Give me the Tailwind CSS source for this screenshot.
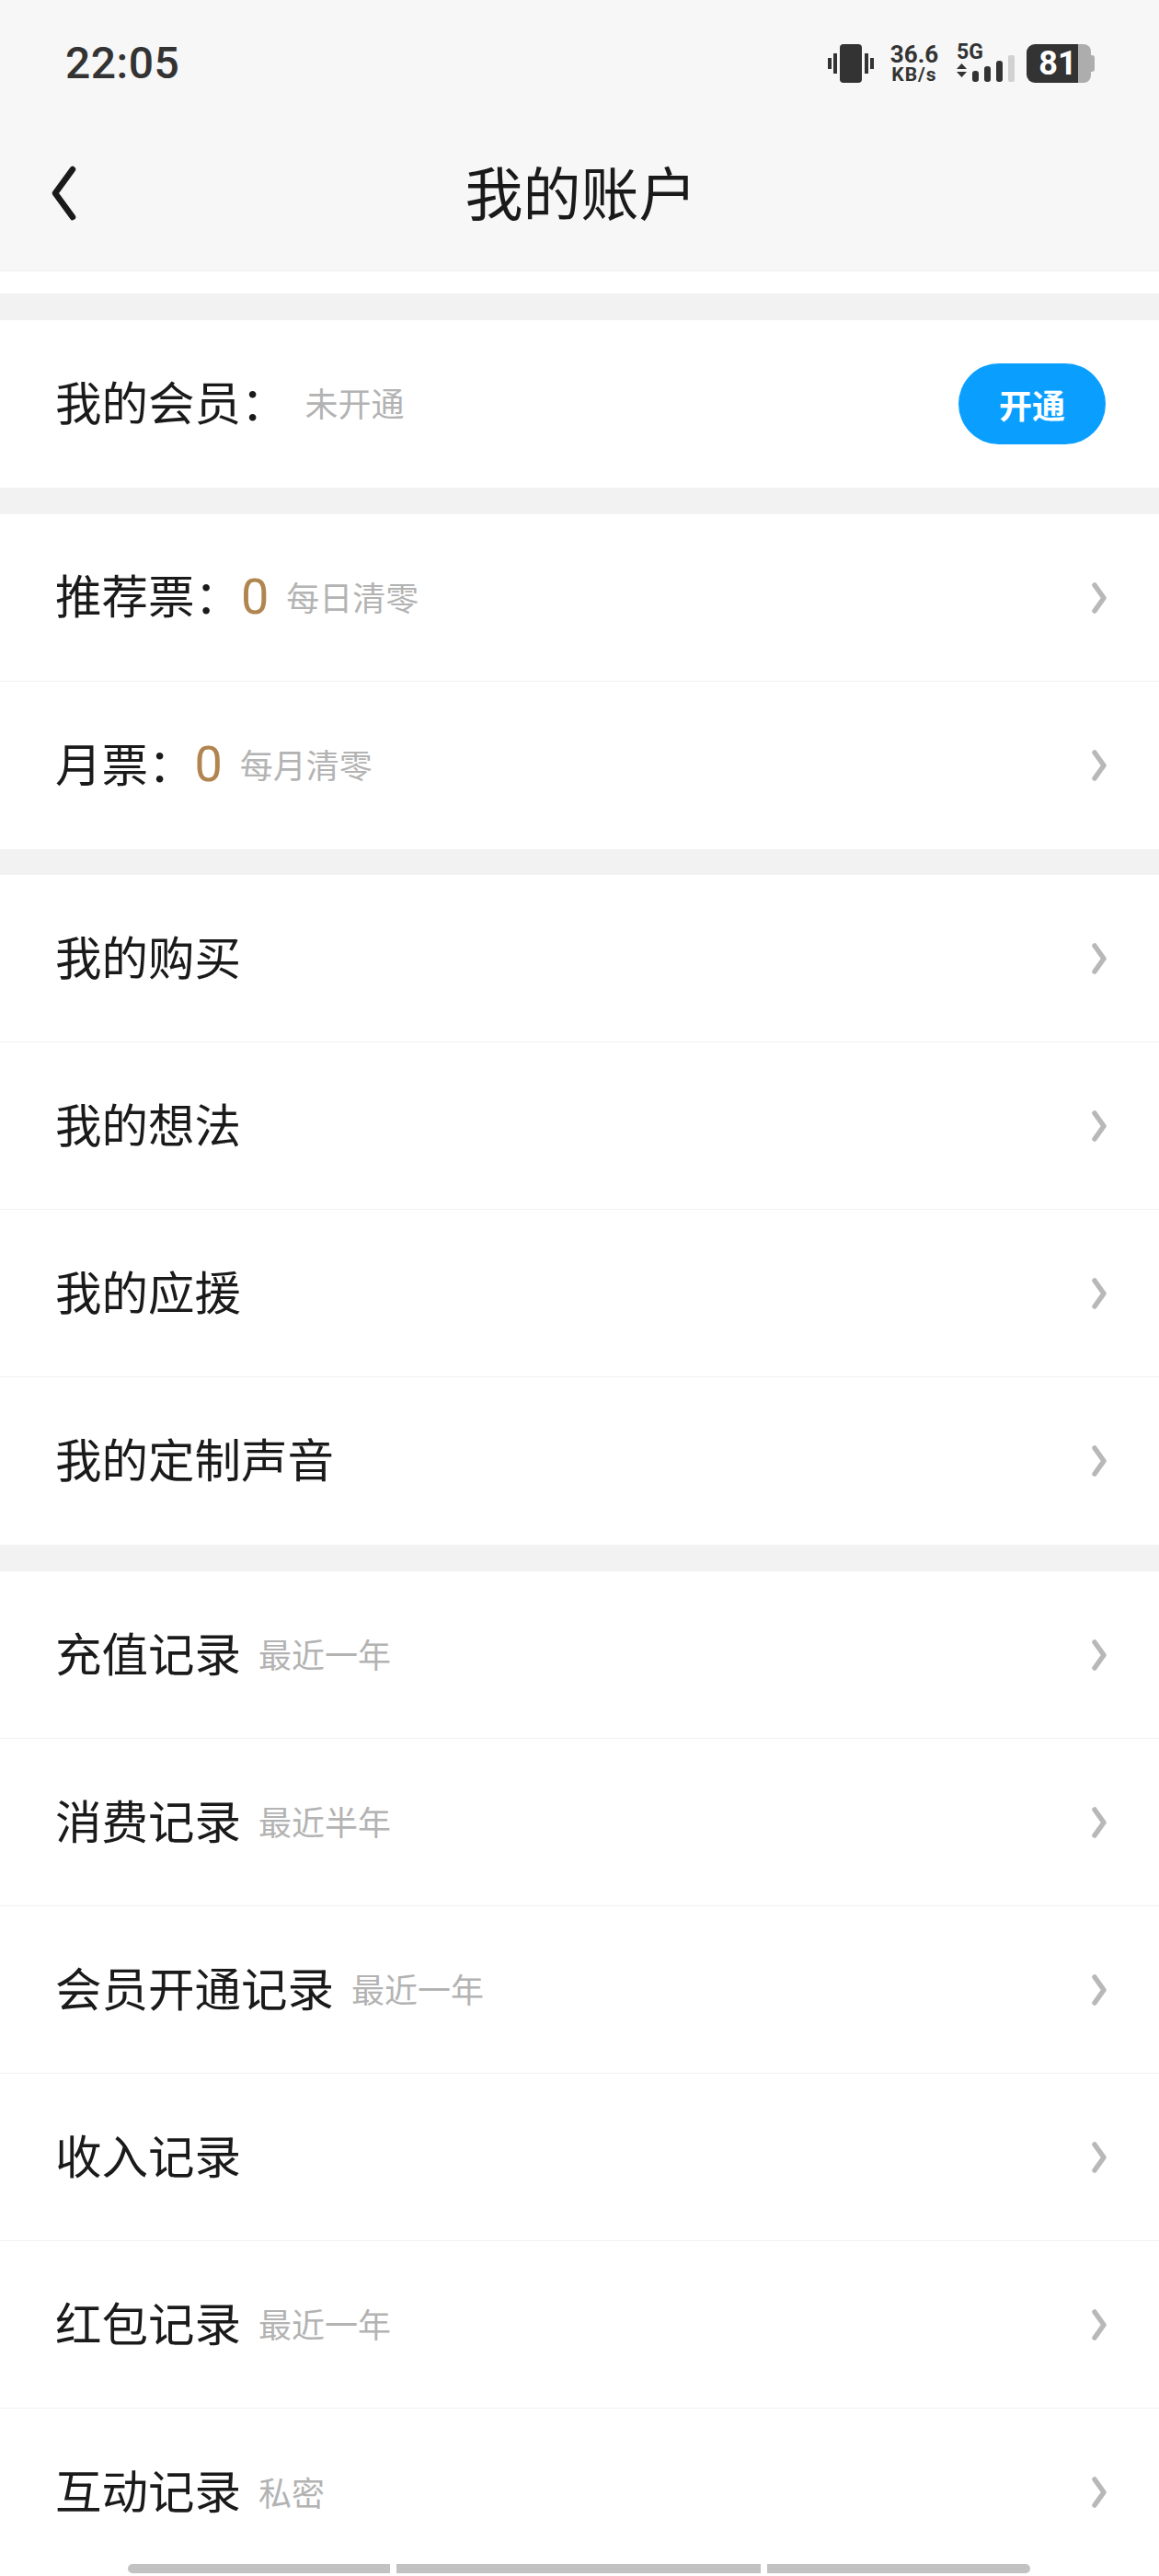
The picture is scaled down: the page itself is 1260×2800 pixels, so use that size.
<!DOCTYPE html>
<html lang="zh-CN">
	<head>
		<meta charset="UTF-8" />
		<meta name="viewport" content="width=device-width, initial-scale=1.0" />
		<title>我的账户</title>
		<script src="https://cdn.jsdelivr.net/npm/@tailwindcss/browser@4"></script>
	</head>
	<body class="bg-white font-['Noto_Sans_CJK_SC',sans-serif] text-[#1a1a1a]">
		<div class="relative w-[1260px] h-[2800px] overflow-hidden">
			<!-- header -->
			<div class="bg-[#f7f7f7] border-b border-[#efefef]">
				<div class="h-[138px] flex items-center justify-between pl-[71px] pr-[70px]">
					<span class="font-['Roboto',sans-serif] font-medium text-[48px] leading-none text-[#333] tracking-[0.5px]">22:05</span>
					<div class="flex items-center text-[#333]">
						<!-- vibrate -->
						<svg class="w-[50px] h-[42px]" viewBox="0 0 50 42" fill="#333">
							<rect x="13" y="0" width="24" height="42" rx="4" />
							<rect x="0" y="15" width="4" height="12" />
							<rect x="6" y="10" width="4" height="22" />
							<rect x="40" y="10" width="4" height="22" />
							<rect x="46" y="15" width="4" height="12" />
						</svg>
						<div class="ml-[16px] w-[56px] flex flex-col items-center font-['Roboto',sans-serif] font-bold">
							<span class="text-[26px] leading-[24px]">36.6</span>
							<span class="text-[21px] leading-[20px] tracking-[1px]">KB/s</span>
						</div>
						<div class="ml-[18px] w-[64px] h-[42px] flex flex-col">
							<span class="h-[18px] font-['Roboto',sans-serif] font-bold text-[23px] leading-[18px]">5G</span>
							<svg class="w-[64px] h-[30px] -mt-[6px]" viewBox="0 0 64 30" fill="#333">
								<path d="M0 15 5.500 9 11 15ZM0 18 5.500 24 11 18Z" />
								<rect x="17" y="17" width="7" height="12" rx="3" />
								<rect x="30" y="12" width="7" height="17" rx="3" />
								<rect x="43" y="6" width="7" height="23" rx="3" />
								<rect x="56" y="0" width="7" height="29" rx="2" fill="#d1d1d1" />
							</svg>
						</div>
						<!-- battery -->
						<div class="ml-[12px] flex items-center h-[42px]">
							<div class="w-[56px] h-[42px] bg-[#333] rounded-l-[9px] flex items-center justify-center">
								<span class="font-['Roboto',sans-serif] font-bold text-white text-[36px] leading-none pl-[12px]">81</span>
							</div>
							<div class="w-[14px] h-[42px] bg-[#adadad] rounded-r-[8px]"></div>
							<div class="w-[4px] h-[18px] bg-[#adadad] rounded-r-[3px]"></div>
						</div>
					</div>
				</div>
				<div class="relative h-[156px] pb-[20px] pl-[3px] flex items-center justify-center">
					<svg class="absolute left-[54px] top-[42px] w-[30px] h-[60px]" viewBox="0 0 30 60" fill="none" stroke="#1a1a1a" stroke-width="6.500" stroke-linecap="round" stroke-linejoin="round">
						<path d="M25 4 6 30 25 56" />
					</svg>
					<h1 class="text-[63px] leading-none font-normal">我的账户</h1>
				</div>
			</div>
			<div class="h-[24px]"></div>

			<div class="h-[29px] bg-[#f2f2f2]"></div>
			<div class="h-[182px] flex items-center pl-[60px] pr-[58px]">
				<span class="mb-[8px] text-[50.500px] leading-none">我的会员<span class="font-['Noto_Sans_CJK_TC',sans-serif]">：</span></span>
				<span class="mb-[5px] ml-[19px] text-[36px] leading-none text-[#b3b3b3]">未开通</span>
				<button class="ml-auto w-[160px] h-[88px] rounded-full bg-[#0a9fff] text-white text-[36px] font-bold leading-none">开通</button>
			</div>

			<div class="h-[29px] bg-[#f2f2f2]"></div>
			<div class="h-[182px] border-b border-[#f2f2f2] flex items-center pl-[60px] pr-[57px]">
				<span class="mb-[8px] text-[50.500px] leading-none">推荐票<span class="font-['Noto_Sans_CJK_TC',sans-serif]">：</span></span>
				<span class="mb-[2px] font-['Roboto',sans-serif] text-[54px] leading-none text-[#b08550]">0</span>
				<span class="mb-[4px] ml-[19px] text-[36px] leading-none text-[#b3b3b3]">每日清零</span>
				<svg class="ml-auto w-[16px] h-[34px]" viewBox="0 0 16 34" fill="none" stroke="#b8b8b8" stroke-width="5.500" stroke-linecap="round" stroke-linejoin="round"><path d="M3 3 13 17 3 31" /></svg>
			</div>
			<div class="h-[182px] flex items-center pl-[60px] pr-[57px]">
				<span class="mb-[8px] text-[50.500px] leading-none">月票<span class="font-['Noto_Sans_CJK_TC',sans-serif]">：</span></span>
				<span class="mb-[2px] font-['Roboto',sans-serif] text-[54px] leading-none text-[#b08550]">0</span>
				<span class="mb-[4px] ml-[19px] text-[36px] leading-none text-[#b3b3b3]">每月清零</span>
				<svg class="ml-auto w-[16px] h-[34px]" viewBox="0 0 16 34" fill="none" stroke="#b8b8b8" stroke-width="5.500" stroke-linecap="round" stroke-linejoin="round"><path d="M3 3 13 17 3 31" /></svg>
			</div>

			<div class="h-[28px] bg-[#f2f2f2]"></div>
			<div class="h-[182px] border-b border-[#f2f2f2] flex items-center pl-[60px] pr-[57px]">
				<span class="mb-[7px] text-[50.500px] leading-none">我的购买</span>
				<svg class="ml-auto w-[16px] h-[34px]" viewBox="0 0 16 34" fill="none" stroke="#b8b8b8" stroke-width="5.500" stroke-linecap="round" stroke-linejoin="round"><path d="M3 3 13 17 3 31" /></svg>
			</div>
			<div class="h-[182px] border-b border-[#f2f2f2] flex items-center pl-[60px] pr-[57px]">
				<span class="mb-[7px] text-[50.500px] leading-none">我的想法</span>
				<svg class="ml-auto w-[16px] h-[34px]" viewBox="0 0 16 34" fill="none" stroke="#b8b8b8" stroke-width="5.500" stroke-linecap="round" stroke-linejoin="round"><path d="M3 3 13 17 3 31" /></svg>
			</div>
			<div class="h-[182px] border-b border-[#f2f2f2] flex items-center pl-[60px] pr-[57px]">
				<span class="mb-[7px] text-[50.500px] leading-none">我的应援</span>
				<svg class="ml-auto w-[16px] h-[34px]" viewBox="0 0 16 34" fill="none" stroke="#b8b8b8" stroke-width="5.500" stroke-linecap="round" stroke-linejoin="round"><path d="M3 3 13 17 3 31" /></svg>
			</div>
			<div class="h-[182px] flex items-center pl-[60px] pr-[57px]">
				<span class="mb-[7px] text-[50.500px] leading-none">我的定制声音</span>
				<svg class="ml-auto w-[16px] h-[34px]" viewBox="0 0 16 34" fill="none" stroke="#b8b8b8" stroke-width="5.500" stroke-linecap="round" stroke-linejoin="round"><path d="M3 3 13 17 3 31" /></svg>
			</div>

			<div class="h-[29px] bg-[#f2f2f2]"></div>
			<div class="h-[182px] border-b border-[#f2f2f2] flex items-center pl-[60px] pr-[57px]">
				<span class="mb-[7px] text-[50.500px] leading-none">充值记录</span>
				<span class="mb-[3px] ml-[19px] text-[36px] leading-none text-[#b3b3b3]">最近一年</span>
				<svg class="ml-auto w-[16px] h-[34px]" viewBox="0 0 16 34" fill="none" stroke="#b8b8b8" stroke-width="5.500" stroke-linecap="round" stroke-linejoin="round"><path d="M3 3 13 17 3 31" /></svg>
			</div>
			<div class="h-[182px] border-b border-[#f2f2f2] flex items-center pl-[60px] pr-[57px]">
				<span class="mb-[7px] text-[50.500px] leading-none">消费记录</span>
				<span class="mb-[3px] ml-[19px] text-[36px] leading-none text-[#b3b3b3]">最近半年</span>
				<svg class="ml-auto w-[16px] h-[34px]" viewBox="0 0 16 34" fill="none" stroke="#b8b8b8" stroke-width="5.500" stroke-linecap="round" stroke-linejoin="round"><path d="M3 3 13 17 3 31" /></svg>
			</div>
			<div class="h-[182px] border-b border-[#f2f2f2] flex items-center pl-[60px] pr-[57px]">
				<span class="mb-[7px] text-[50.500px] leading-none">会员开通记录</span>
				<span class="mb-[3px] ml-[19px] text-[36px] leading-none text-[#b3b3b3]">最近一年</span>
				<svg class="ml-auto w-[16px] h-[34px]" viewBox="0 0 16 34" fill="none" stroke="#b8b8b8" stroke-width="5.500" stroke-linecap="round" stroke-linejoin="round"><path d="M3 3 13 17 3 31" /></svg>
			</div>
			<div class="h-[182px] border-b border-[#f2f2f2] flex items-center pl-[60px] pr-[57px]">
				<span class="mb-[7px] text-[50.500px] leading-none">收入记录</span>
				<svg class="ml-auto w-[16px] h-[34px]" viewBox="0 0 16 34" fill="none" stroke="#b8b8b8" stroke-width="5.500" stroke-linecap="round" stroke-linejoin="round"><path d="M3 3 13 17 3 31" /></svg>
			</div>
			<div class="h-[182px] border-b border-[#f2f2f2] flex items-center pl-[60px] pr-[57px]">
				<span class="mb-[7px] text-[50.500px] leading-none">红包记录</span>
				<span class="mb-[3px] ml-[19px] text-[36px] leading-none text-[#b3b3b3]">最近一年</span>
				<svg class="ml-auto w-[16px] h-[34px]" viewBox="0 0 16 34" fill="none" stroke="#b8b8b8" stroke-width="5.500" stroke-linecap="round" stroke-linejoin="round"><path d="M3 3 13 17 3 31" /></svg>
			</div>
			<div class="h-[182px] flex items-center pl-[60px] pr-[57px]">
				<span class="mb-[7px] text-[50.500px] leading-none">互动记录</span>
				<span class="mb-[3px] ml-[19px] text-[36px] leading-none text-[#b3b3b3]">私密</span>
				<svg class="ml-auto w-[16px] h-[34px]" viewBox="0 0 16 34" fill="none" stroke="#b8b8b8" stroke-width="5.500" stroke-linecap="round" stroke-linejoin="round"><path d="M3 3 13 17 3 31" /></svg>
			</div>

			<!-- scroll indicator -->
			<div class="absolute left-[139px] top-[2787px] flex gap-[7px] h-[10px]">
				<div class="w-[285px] bg-[#c2c2c2] rounded-l-[5px]"></div>
				<div class="w-[396px] bg-[#c2c2c2]"></div>
				<div class="w-[286px] bg-[#c2c2c2] rounded-r-[5px]"></div>
			</div>
		</div>
	</body>
</html>
